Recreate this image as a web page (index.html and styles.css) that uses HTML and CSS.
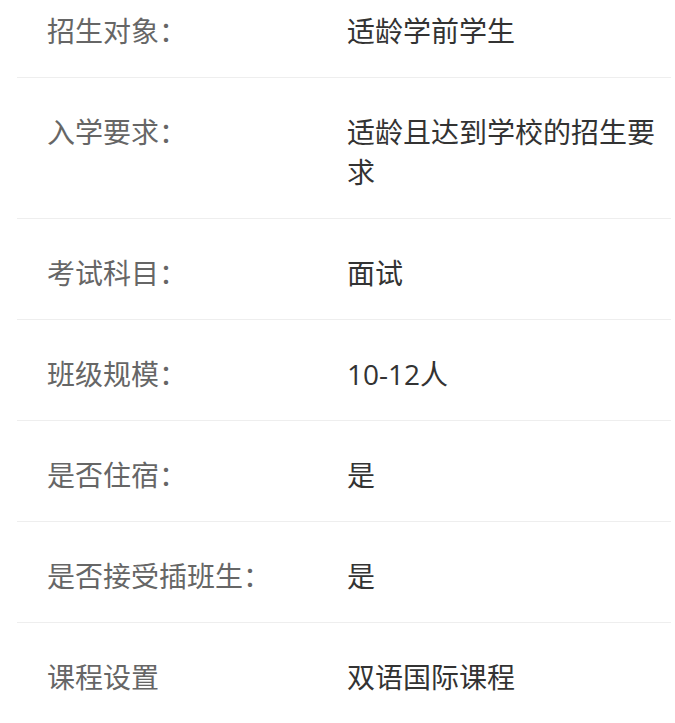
FILE: index.html
```
<!DOCTYPE html>
<html lang="zh-CN">
<head>
    <meta charset="UTF-8">
    <meta name="viewport" content="width=device-width, initial-scale=1.0">
    <title>招生信息</title>
    <link rel="stylesheet" href="styles.css">
</head>
<body>

    <ul class="info-list">
        <li class="info-row">
            <span class="info-label">招生对象：</span>
            <span class="info-value">适龄学前学生</span>
        </li>
        <li class="info-row">
            <span class="info-label">入学要求：</span>
            <span class="info-value">适龄且达到学校的招生要求</span>
        </li>
        <li class="info-row">
            <span class="info-label">考试科目：</span>
            <span class="info-value">面试</span>
        </li>
        <li class="info-row">
            <span class="info-label">班级规模：</span>
            <span class="info-value">10-12人</span>
        </li>
        <li class="info-row">
            <span class="info-label">是否住宿：</span>
            <span class="info-value">是</span>
        </li>
        <li class="info-row">
            <span class="info-label">是否接受插班生：</span>
            <span class="info-value">是</span>
        </li>
        <li class="info-row">
            <span class="info-label">课程设置</span>
            <span class="info-value">双语国际课程</span>
        </li>
    </ul>

</body>
</html>
```

FILE: styles.css
```
body {
    font-family: "Open Sans", "Noto Sans CJK SC", sans-serif;
    margin: 0;
    padding: 0;
    background-color: #ffffff;
}

.info-list {
    list-style: none;
    margin: -23px 4px 0 17px;
    padding: 0;
}

.info-row {
    display: flex;
    padding: 34px 0 26px;
    border-bottom: 1px solid #eeeeee;
    font-size: 28px;
    line-height: 40px;
}

.info-label {
    flex: 0 0 330px;
    padding-left: 30px;
    box-sizing: border-box;
    color: #666;
}

.info-value {
    flex: 1;
    color: #333;
}
```
